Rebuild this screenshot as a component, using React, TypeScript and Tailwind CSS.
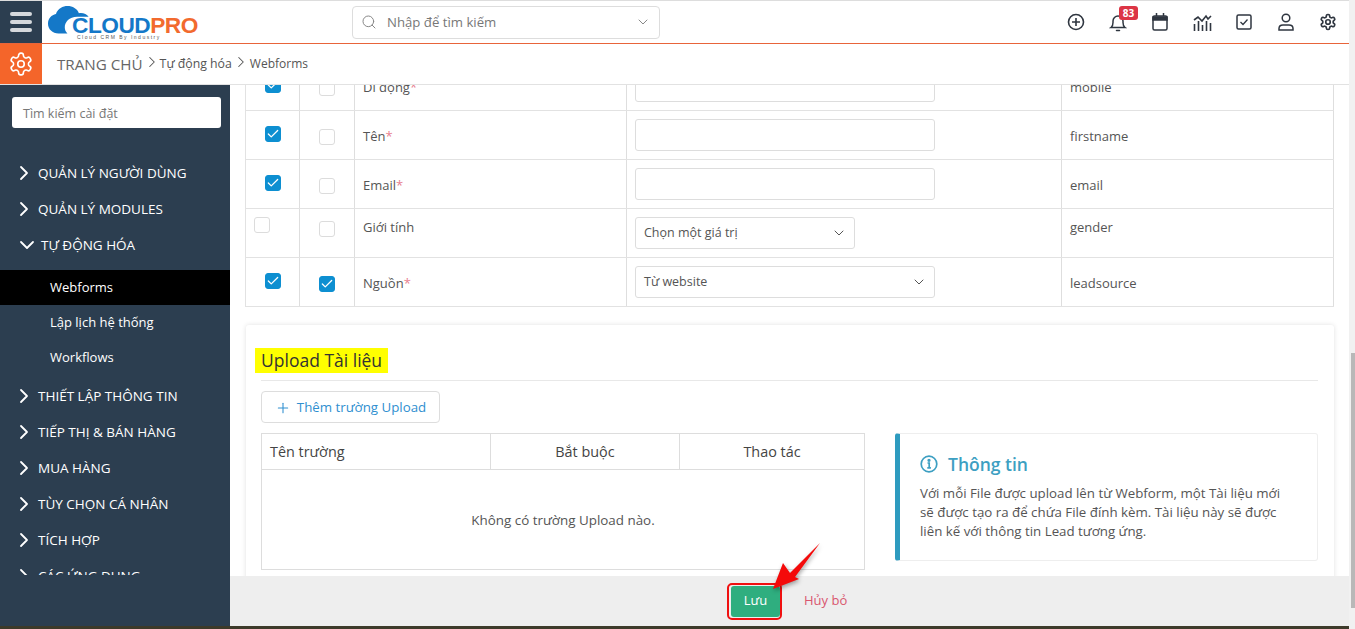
import { ChevronRight, ChevronDown, Check, Search, Plus } from 'lucide-react';

const sidebarTop = ['QUẢN LÝ NGƯỜI DÙNG', 'QUẢN LÝ MODULES'];
const sidebarSub = ['Webforms', 'Lập lịch hệ thống', 'Workflows'];
const sidebarBottom = ['THIẾT LẬP THÔNG TIN', 'TIẾP THỊ & BÁN HÀNG', 'MUA HÀNG', 'TÙY CHỌN CÁ NHÂN', 'TÍCH HỢP', 'CÁC ỨNG DỤNG'];

const gear = 'M12.220 2h-.44a2 2 0 0 0-2 2v.18a2 2 0 0 1-1 1.730l-.43.250a2 2 0 0 1-2 0l-.15-.08a2 2 0 0 0-2.730.730l-.22.380a2 2 0 0 0 .730 2.730l.15.100a2 2 0 0 1 1 1.720v.510a2 2 0 0 1-1 1.740l-.15.090a2 2 0 0 0-.730 2.730l.22.380a2 2 0 0 0 2.730.730l.15-.08a2 2 0 0 1 2 0l.43.250a2 2 0 0 1 1 1.730V20a2 2 0 0 0 2 2h.44a2 2 0 0 0 2-2v-.18a2 2 0 0 1 1-1.730l.43-.250a2 2 0 0 1 2 0l.15.080a2 2 0 0 0 2.730-.730l.22-.390a2 2 0 0 0-.730-2.730l-.15-.080a2 2 0 0 1-1-1.740v-.5a2 2 0 0 1 1-1.740l.15-.090a2 2 0 0 0 .730-2.730l-.22-.380a2 2 0 0 0-2.730-.730l-.15.080a2 2 0 0 1-2 0l-.43-.250a2 2 0 0 1-1-1.730V4a2 2 0 0 0-2-2z';

const Box = ({ checked }: { checked?: boolean }) => (
  <span className={`flex h-4 w-4 items-center justify-center rounded-[3px] border ${checked ? 'border-[#0d8fd1] bg-[#0d8fd1]' : 'border-[#dcdcdc] bg-white'}`}>
    {checked && <Check className="h-3.5 w-3.5 text-white" strokeWidth={2.2} />}
  </span>
);

const Input = () => <div className="h-[32px] w-[300px] rounded-[3px] border border-[#dddddd] bg-white" />;

const Select = ({ label, width }: { label: string; width: string }) => (
  <div className={`flex h-[32px] items-center justify-between rounded-[3px] border border-[#dddddd] bg-white pl-2 pr-[7px] text-[12.5px] text-[#555] ${width}`}>
    {label}
    <ChevronDown className="h-4 w-4 text-[#555]" strokeWidth={1.5} />
  </div>
);

type Row = { a: boolean; b: boolean; label: string; req: boolean; name: string; field: React.ReactNode; top?: boolean };

const rows: Row[] = [
  { a: true, b: false, label: 'Di động', req: true, name: 'mobile', field: <Input /> },
  { a: true, b: false, label: 'Tên', req: true, name: 'firstname', field: <Input /> },
  { a: true, b: false, label: 'Email', req: true, name: 'email', field: <Input /> },
  { a: false, b: false, label: 'Giới tính', req: false, name: 'gender', field: <Select label="Chọn một giá trị" width="w-[220px]" />, top: true },
  { a: true, b: true, label: 'Nguồn', req: true, name: 'leadsource', field: <Select label="Từ website" width="w-[300px]" /> },
];

const Logo = () => (
  <div className="relative ml-[6px] h-[42px] w-[151px] shrink-0 overflow-hidden">
    <svg viewBox="0 0 60 36" className="absolute left-0 top-[5px] h-[32px] w-[53px]">
      <path d="M12 31C5 31 0 26 0 20c0-6 4-10 9-11 2-6 8-9 13-9 6 0 11 3 13 8 4-1 9 1 11 4H33c-9 0-14 6-14 12 0 3 1 5 3 7z" fill="#1478c8" />
    </svg>
    <span className="absolute left-[24px] top-[12px] flex font-['Liberation_Sans',sans-serif] text-[22.7px] leading-[24px] font-bold tracking-[-0.5px]">
      <span className="text-[#1478c8]">CLOUD</span>
      <span className="text-[#f26a2e]">PRO</span>
    </span>
    <span className="absolute left-[29px] top-[33px] font-['Liberation_Sans',sans-serif] text-[5px] leading-[6px] tracking-[1.5px] text-[#555]">Cloud CRM By Industry</span>
  </div>
);

export default function App() {
  return (
    <div className="flex h-[629px] w-[1355px] overflow-hidden bg-white font-['Open_Sans',sans-serif]">
      <div className="flex min-w-0 flex-1 flex-col">
        <div className="h-px bg-[#dddddd]" />
        <header className="flex h-[43px] shrink-0 items-center border-b border-[#e8643a] bg-white">
          <div className="flex h-[42px] w-[42px] shrink-0 flex-col justify-center gap-[4px] bg-[#2c3e50] px-[10px]">
            <span className="h-[4px] rounded bg-[#d5d8dc]" />
            <span className="h-[4px] rounded bg-[#d5d8dc]" />
            <span className="h-[4px] rounded bg-[#d5d8dc]" />
          </div>
          <Logo />
          <div className="ml-[153px] flex h-[33px] w-[308px] items-center rounded-[4px] border border-[#dddddd] px-2 text-[13.2px] text-[#777]">
            <Search className="mr-[10px] h-4 w-4 text-[#888]" strokeWidth={1.5} />
            <span className="flex-1 pt-px">Nhập để tìm kiếm</span>
            <ChevronDown className="h-4 w-4 text-[#888]" strokeWidth={1.5} />
          </div>
          <div className="ml-auto flex items-center text-[#2f3640]">
            <span className="flex w-[42px] justify-center">
              <svg width="18" height="18" viewBox="0 0 18 18" fill="none" stroke="currentColor" strokeWidth="1.6"><circle cx="9" cy="9" r="7.5" /><path d="M9 5v8M5 9h8" /></svg>
            </span>
            <span className="relative flex w-[42px] justify-center">
              <svg width="18" height="19" viewBox="0 0 18 19" fill="none" stroke="currentColor" strokeWidth="1.5"><path d="M2 14.5c1.5-1 2-2.500 2-5V8a5 5 0 0 1 10 0v1.500c0 2.500.5 4 2 5z" /><path d="M7.500 17.500h3" strokeLinecap="round" /></svg>
              <span className="absolute left-[22px] top-[-7px] h-[14px] w-[19px] rounded-[3px] bg-[#dc3545] text-center text-[10px] leading-[14px] font-bold text-white">83</span>
            </span>
            <span className="flex w-[42px] justify-center">
              <svg width="16" height="18" viewBox="0 0 16 18" fill="none" stroke="currentColor" strokeWidth="1.5"><rect x="1" y="3" width="14" height="14" rx="1.500" /><path d="M1 4h14v3H1z" fill="currentColor" /><path d="M4.500 0v3M11.500 0v3" /></svg>
            </span>
            <span className="flex w-[42px] justify-center">
              <svg width="19" height="17" viewBox="0 0 19 17" fill="none" stroke="currentColor" strokeWidth="1.6"><path d="M1 6l4-3 4 4 4-5 2 3 3-3" /><path d="M1.500 10v7M5.500 7v10M9.500 11v6M13.500 7v10M17.500 9v8" /></svg>
            </span>
            <span className="flex w-[42px] justify-center">
              <svg width="16" height="16" viewBox="0 0 16 16" fill="none" stroke="currentColor" strokeWidth="1.5"><rect x="1" y="1" width="14" height="14" rx="1.500" /><path d="M4.500 8l2.500 2.500 4.500-5" strokeWidth="1.300" /></svg>
            </span>
            <span className="flex w-[42px] justify-center">
              <svg width="16" height="18" viewBox="0 0 16 18" fill="none" stroke="currentColor" strokeWidth="1.5"><circle cx="8" cy="5" r="3.800" /><path d="M1 17v-1.500C1 13 3 12 5 12h6c2 0 4 1 4 3.500V17z" /></svg>
            </span>
            <span className="flex w-[42px] justify-center">
              <svg width="18" height="18" viewBox="0 0 24 24" fill="none" stroke="currentColor" strokeWidth="2.2"><path d={gear} /><circle cx="12" cy="12" r="3" /></svg>
            </span>
          </div>
        </header>

        <div className="flex h-[41px] shrink-0 items-center border-b border-[#e2e2e2] bg-white">
          <div className="flex h-[40px] w-[42px] items-center justify-center bg-[#f4652a]">
            <svg width="26" height="26" viewBox="0 0 24 24" fill="none" stroke="white" strokeWidth="1.500"><path d={gear} /><circle cx="12" cy="12" r="3" /></svg>
          </div>
          <span className="ml-[15px] text-[15.2px] font-medium text-[#666]">TRANG CHỦ</span>
          <ChevronRight className="h-[18px] w-[18px] -translate-y-0.5 text-[#555]" strokeWidth={1.4} />
          <span className="-ml-px text-[12.3px] text-[#555]">Tự động hóa</span>
          <ChevronRight className="h-[18px] w-[18px] -translate-y-0.5 text-[#555]" strokeWidth={1.4} />
          <span className="text-[12px] text-[#555]">Webforms</span>
        </div>

        <div className="flex min-h-0 flex-1">
          <aside className="flex w-[230px] shrink-0 flex-col bg-[#2c3e50]">
            <div className="ml-3 mr-[9px] mt-3 flex h-[31px] items-center rounded-[3px] bg-white px-[11px] pt-[3px] text-[12.5px] text-[#777]">Tìm kiếm cài đặt</div>
            <nav className="mt-[27px] h-[420px] overflow-hidden text-[13.5px] text-white">
              {sidebarTop.map((m) => (
                <div key={m} className="flex h-[36px] items-center pl-[12px]">
                  <ChevronRight className="mr-[2px] h-6 w-6" strokeWidth={1.8} />
                  {m}
                </div>
              ))}
              <div className="flex h-[36px] items-center pl-[15px]">
                <ChevronDown className="mr-[2px] h-6 w-6" strokeWidth={1.8} />
                TỰ ĐỘNG HÓA
              </div>
              <div className="mt-[7px] text-[13px] font-medium">
                {sidebarSub.map((s, i) => (
                  <div key={s} className={`flex h-[35px] items-center pl-[50px] ${i === 0 ? 'bg-black' : ''}`}>{s}</div>
                ))}
              </div>
              <div className="mt-[3px]">
                {sidebarBottom.map((m) => (
                  <div key={m} className="flex h-[36px] items-center pl-[12px]">
                    <ChevronRight className="mr-[2px] h-6 w-6" strokeWidth={1.8} />
                    {m}
                  </div>
                ))}
              </div>
            </nav>
          </aside>

          <div className="relative flex min-w-0 flex-1 flex-col">
            <main className="min-h-0 flex-1 overflow-hidden pl-[15px] pr-[15px]">
              <div className="-mt-[24px] border-b border-l border-[#e2e2e2]">
                {rows.map((r) => (
                  <div key={r.name} className="grid h-[49px] grid-cols-[54px_55px_272px_435px_272px] border-t border-[#e2e2e2] text-[13px] text-[#555]">
                    <div className={`flex border-r border-[#dedede] ${r.a ? 'justify-center' : 'pl-2'} ${r.top ? 'pt-[8px]' : 'pt-[15px]'}`}><Box checked={r.a} /></div>
                    <div className={`flex justify-center border-r border-[#dedede] ${r.top ? 'pt-[12px]' : 'pt-[18px]'}`}><Box checked={r.b} /></div>
                    <div className={`border-r border-[#dedede] pl-2 ${r.top ? 'pt-[9px]' : 'pt-[16px]'}`}>
                      {r.label}{r.req && <span className="text-[#e8808f]">*</span>}
                    </div>
                    <div className="border-r border-[#dedede] pl-2 pt-2">{r.field}</div>
                    <div className={`border-r border-[#dedede] pl-2 ${r.top ? 'pt-[9px]' : 'pt-[16px]'}`}>{r.name}</div>
                  </div>
                ))}
              </div>

              <section className="ml-px mt-[18px] h-[300px] rounded-[3px] bg-white pl-[15px] pr-[16px] pt-[23px] shadow-[0_0_5px_rgba(0,0,0,0.12)]">
                <div className="border-b border-[#e8e8e8] pb-[7px]">
                  <h3 className="-ml-1.5 inline-block bg-[#ffff00] px-1.5 text-[17.5px] leading-[25px] font-medium text-[#333]">Upload Tài liệu</h3>
                </div>
                <button className="mt-[10px] flex h-[32px] w-[179px] items-center justify-center gap-[6px] rounded-[4px] border border-[#dddddd] pt-px text-[13.3px] text-[#2f8fd0]">
                  <Plus className="h-4 w-4" strokeWidth={1.6} />
                  Thêm trường Upload
                </button>
                <div className="mt-[10px] flex gap-[30px]">
                  <div className="h-[137px] w-[604px] border border-[#dddddd]">
                    <div className="grid h-[36px] grid-cols-[229px_189px_1fr] border-b border-[#dddddd] text-[14.4px] font-medium text-[#444]">
                      <div className="flex items-center border-r border-[#dddddd] pl-2">Tên trường</div>
                      <div className="flex items-center justify-center border-r border-[#dddddd]">Bắt buộc</div>
                      <div className="flex items-center justify-center">Thao tác</div>
                    </div>
                    <div className="flex h-[100px] items-center justify-center text-[13.4px] text-[#555]">Không có trường Upload nào.</div>
                  </div>
                  <div className="h-[128px] w-[423px] rounded-[3px] border border-l-[5px] border-[#eeeeee] border-l-[#2e9bbf] pl-5 pt-[17px]">
                    <div className="flex items-center gap-[10px] text-[17.5px] leading-[26px] font-semibold text-[#3d9fc2]">
                      <svg width="18" height="18" viewBox="0 0 18 18" fill="none" stroke="currentColor" strokeWidth="1.700"><circle cx="9" cy="9" r="7.800" /><path d="M7.500 8h1.700v4.500M7.300 12.800h3.600" /><circle cx="9" cy="5.300" r="0.800" fill="currentColor" /></svg>
                      Thông tin
                    </div>
                    <p className="mt-[7px] whitespace-nowrap text-[13.3px] leading-[19px] text-[#555]">
                      Với mỗi File được upload lên từ Webform, một Tài liệu mới<br />
                      sẽ được tạo ra để chứa File đính kèm. Tài liệu này sẽ được<br />
                      liên kế với thông tin Lead tương ứng.
                    </p>
                  </div>
                </div>
              </section>
            </main>

            <footer className="relative flex h-[50px] shrink-0 items-center bg-[#eeeeee] pl-[497px]">
              <div className="flex h-[37px] w-[55px] items-center rounded-[5px] border-2 border-[#f01010] bg-[#eeeeee] pl-[2px]">
                <button className="h-[31px] w-[49px] rounded-[3px] bg-[#2fae7f] text-[13px] text-white">Lưu</button>
              </div>
              <span className="ml-[22px] text-[13px] text-[#d9566f]">Hủy bỏ</span>
            </footer>
            <svg className="absolute bottom-[16px] left-[535px] h-[80px] w-[65px] drop-shadow-[1px_2px_2px_rgba(0,0,0,0.35)]" viewBox="0 0 65 80">
              <path d="M8 59L18 33 25 43 55 13 30 47 34 49z" fill="#f40a0a" />
            </svg>
          </div>
        </div>
        <div className="h-[3px] shrink-0 bg-[#3d3a2a]" />
      </div>
      <div className="flex w-[6px] shrink-0 flex-col bg-[#f1f1f1] pl-[2px] pt-[353px]">
        <div className="h-[255px] bg-[#b8b8b8]" />
      </div>
    </div>
  );
}
